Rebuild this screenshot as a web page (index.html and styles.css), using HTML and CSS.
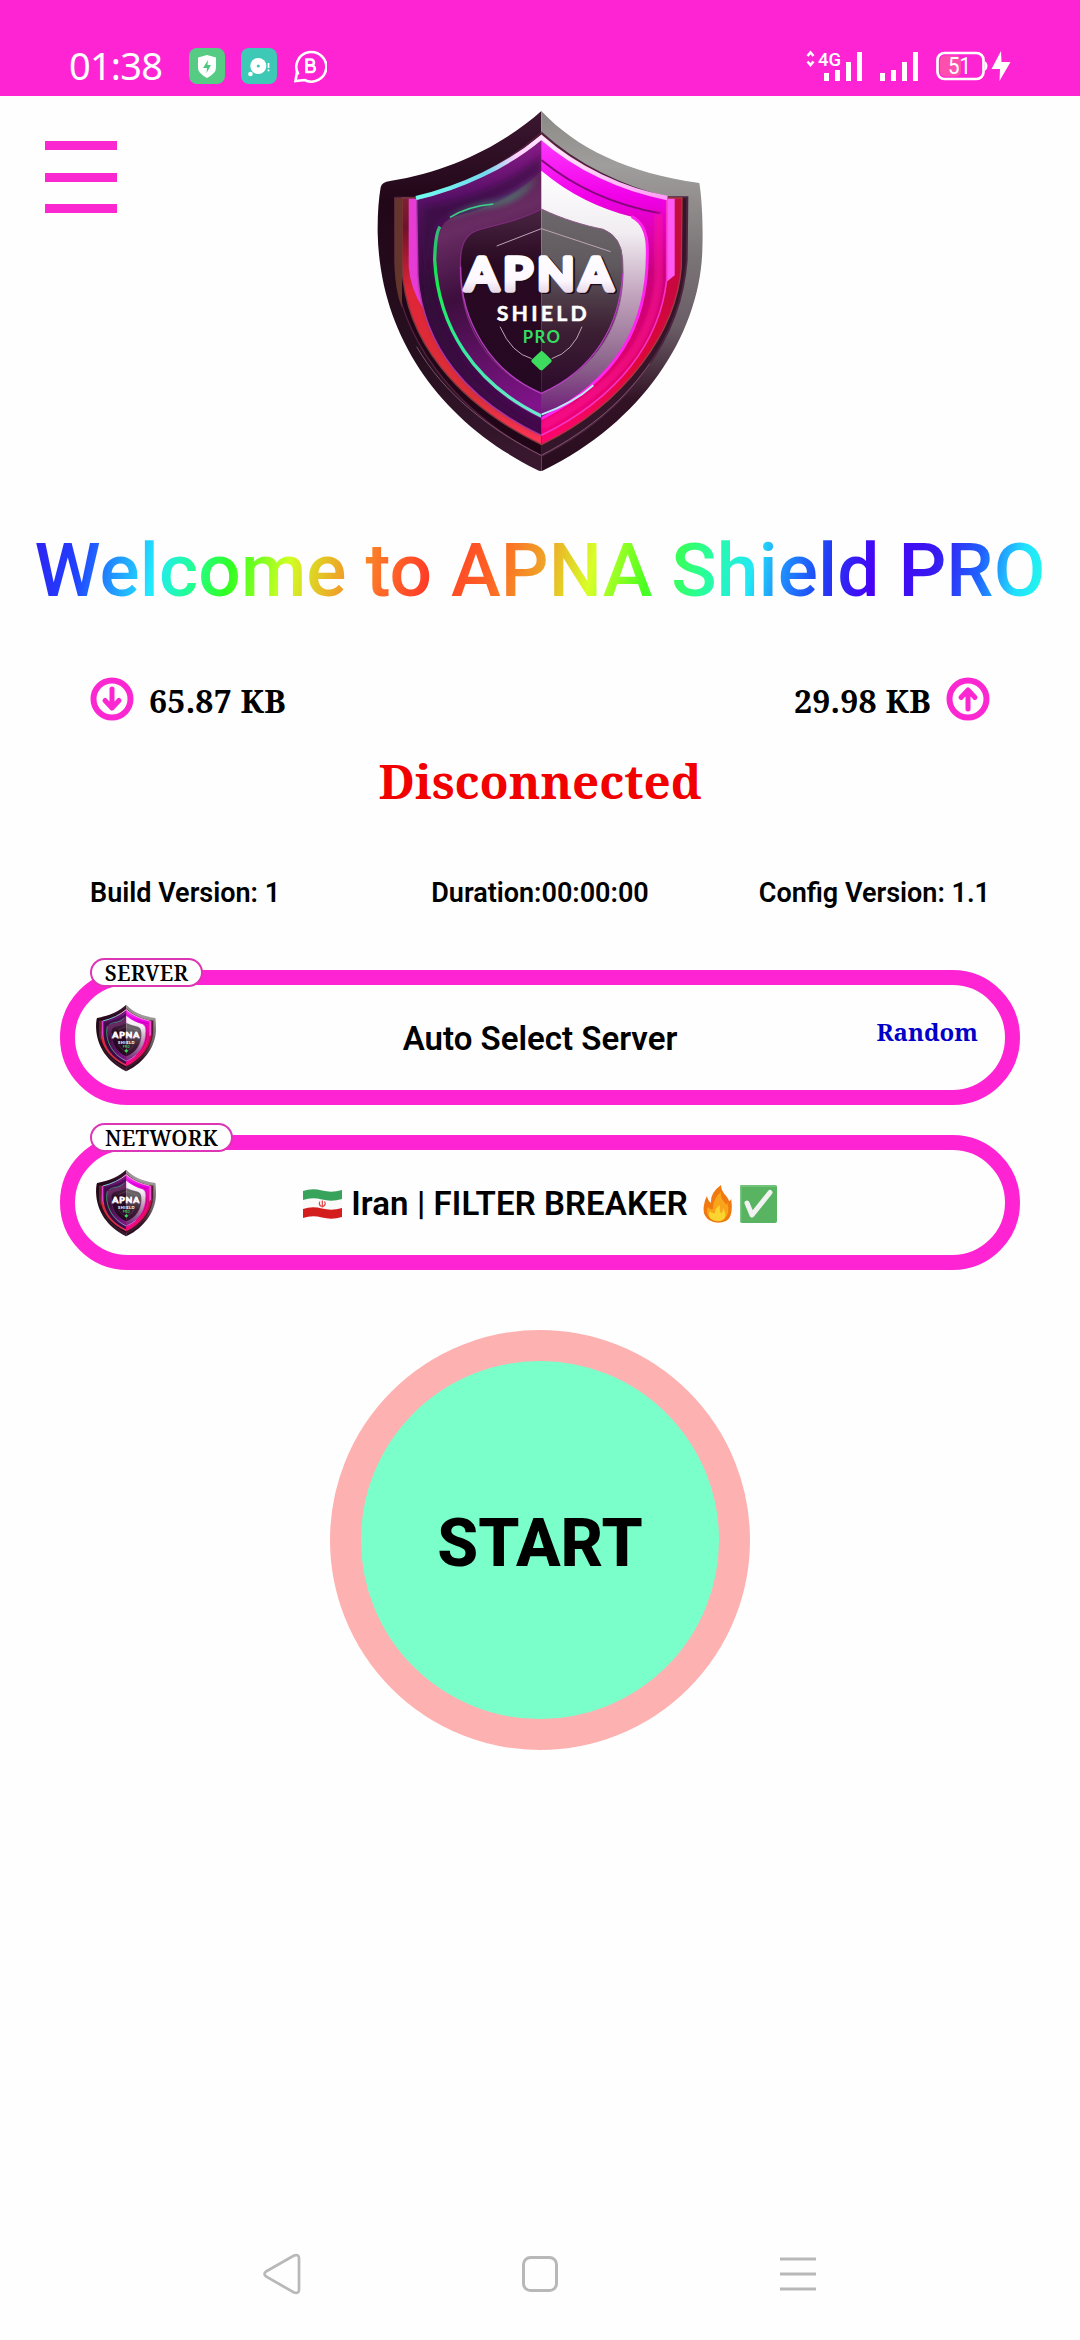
FILE: index.html
```html
<!DOCTYPE html>
<html lang="en">
<head>
<meta charset="utf-8">
<title>APNA Shield PRO</title>
<link rel="stylesheet" href="styles.css">
</head>
<body>
<svg class="defs" width="0" height="0" aria-hidden="true">
  <defs>
    <linearGradient id="rimDark" x1="0" y1="0" x2="0" y2="1"><stop offset="0" stop-color="#3b1730"/><stop offset=".25" stop-color="#220718"/><stop offset=".7" stop-color="#26101f"/><stop offset="1" stop-color="#3b1930"/></linearGradient>
    <linearGradient id="rimLight" x1="0" y1="0" x2="0" y2="1"><stop offset="0" stop-color="#8b8985"/><stop offset=".15" stop-color="#a09e9c"/><stop offset=".4" stop-color="#7b7577"/><stop offset=".6" stop-color="#6a5d66"/><stop offset=".8" stop-color="#321325"/><stop offset="1" stop-color="#280c1e"/></linearGradient>
    <linearGradient id="redLeft" x1="0" y1="0" x2="0" y2="1"><stop offset="0" stop-color="#9c4047"/><stop offset=".3" stop-color="#701327"/><stop offset=".5" stop-color="#e02537"/><stop offset=".85" stop-color="#dc3039"/><stop offset="1" stop-color="#ff3458"/></linearGradient>
    <linearGradient id="redRight" x1="0" y1="0" x2="0" y2="1"><stop offset="0" stop-color="#b91734"/><stop offset=".5" stop-color="#c90740"/><stop offset=".75" stop-color="#e00838"/><stop offset="1" stop-color="#ff0474"/></linearGradient>
    <linearGradient id="bandLeft" x1="0" y1="0" x2="0" y2="1"><stop offset="0" stop-color="#8a1a87"/><stop offset=".2" stop-color="#5a1169"/><stop offset=".5" stop-color="#370d3d"/><stop offset="1" stop-color="#4a0852"/></linearGradient>
    <linearGradient id="bandRight" x1="0" y1="0" x2="0" y2="1"><stop offset="0" stop-color="#ff3bff"/><stop offset=".2" stop-color="#f000e8"/><stop offset=".45" stop-color="#c7007c"/><stop offset=".75" stop-color="#da0065"/><stop offset="1" stop-color="#f00079"/></linearGradient>
    <linearGradient id="plateLeft" x1="0" y1="0" x2=".3" y2="1"><stop offset="0" stop-color="#581951"/><stop offset=".25" stop-color="#682c62"/><stop offset=".5" stop-color="#3d0e3e"/><stop offset="1" stop-color="#81138a"/></linearGradient>
    <linearGradient id="plateRight" x1="0" y1="0" x2="0" y2="1"><stop offset="0" stop-color="#ffffff"/><stop offset=".25" stop-color="#f1edf1"/><stop offset=".5" stop-color="#c2a4be"/><stop offset=".78" stop-color="#8c648b"/><stop offset="1" stop-color="#6d1878"/></linearGradient>
    <linearGradient id="coreLeft" x1="0" y1="0" x2="0" y2="1"><stop offset="0" stop-color="#492542"/><stop offset=".3" stop-color="#2a0922"/><stop offset="1" stop-color="#240822"/></linearGradient>
    <linearGradient id="coreRight" x1="0" y1="0" x2="0" y2="1"><stop offset="0" stop-color="#6d686b"/><stop offset=".3" stop-color="#605a5e"/><stop offset=".65" stop-color="#3d2034"/><stop offset="1" stop-color="#2c0a2a"/></linearGradient>
    <linearGradient id="edgeTop" x1="0" y1="0" x2="1" y2="0"><stop offset="0" stop-color="#70ffee"/><stop offset=".28" stop-color="#73d9ed"/><stop offset=".4" stop-color="#ffd0ff"/><stop offset=".52" stop-color="#ffe8ff"/><stop offset="1" stop-color="#ff9af4"/></linearGradient>
    <linearGradient id="edgeGreen" x1="0" y1="0" x2="0" y2="1"><stop offset="0" stop-color="#32b57a"/><stop offset=".3" stop-color="#15ec4c"/><stop offset=".65" stop-color="#38e8a0"/><stop offset="1" stop-color="#6fe9cf"/></linearGradient>
    <linearGradient id="letters" x1="0" y1="0" x2="0" y2="1"><stop offset="0" stop-color="#ffffff"/><stop offset=".65" stop-color="#fdf8ff"/><stop offset="1" stop-color="#dcc3d6"/></linearGradient>
    <clipPath id="leftHalf"><rect x="0" y="0" width="544" height="1160"/></clipPath>
    <clipPath id="rightHalf"><rect x="544" y="0" width="536" height="1160"/></clipPath>
    <filter id="glow" x="-20%" y="-20%" width="140%" height="140%"><feGaussianBlur stdDeviation="9"/></filter>
    <path id="rim" d="M544 33C650 145 800 218 1018 249C1028 310 1029 400 1027 450C1020 700 850 965 552 1110Q542 1116 532 1110C240 965 60 710 53 400Q52 320 62 262Q66 245 90 243C270 215 430 135 544 33Z"/>
    <path id="channel" d="M544 98C650 195 790 262 920 292L982 292L980 480C965 700 820 930 544 1068C275 930 110 700 104 480L104 292L166 292C300 262 435 195 544 98Z"/>
    <path id="redBand" d="M544 105C650 200 790 265 920 294L966 294L964 500C950 690 800 910 544 1034C290 910 135 720 126 500L126 294L166 294C300 265 440 200 544 105Z"/>
    <path id="innerBand" d="M544 112C650 206 790 270 920 296L920 540C900 720 780 890 544 1006C320 900 190 740 174 530L170 298C300 268 440 204 544 112Z"/>
    <path id="plate" d="M544 212C630 285 720 325 815 350Q862 372 862 450C865 680 770 840 544 956C340 860 235 680 226 480Q226 370 280 350C390 325 470 285 544 212Z"/>
    <path id="core" d="M544 327C610 358 670 376 730 388Q785 410 788 480C800 670 710 810 544 880C380 810 290 670 302 470Q306 402 360 388C425 372 490 356 544 327Z"/>
    <symbol id="shield" viewBox="52 33 976 1080">
      <g clip-path="url(#leftHalf)">
        <use href="#rim" fill="url(#rimDark)"/>
        <use href="#channel" fill="#210617" stroke="#54203f" stroke-width="4"/>
        <use href="#redBand" fill="url(#redLeft)" stroke="#7b3940" stroke-width="4"/>
        <path d="M104 294h22v330q-20-50-22-120z" fill="#63352b"/>
        <path d="M146 296h28v244l14 84q-38-62-42-124z" fill="#e63bd4"/>
        <use href="#innerBand" fill="url(#bandLeft)" stroke="#b03caf" stroke-width="4"/>
        <path d="M186 320C320 300 450 250 544 165V215C440 290 340 325 245 360Q205 400 205 500C220 700 330 880 544 985V1000C330 890 200 740 188 530Z" fill="#2b0b32" opacity=".5" filter="url(#glow)"/>
        <use href="#plate" fill="url(#plateLeft)"/>
        <path d="M240 380Q226 400 224 480C235 680 340 850 544 948" fill="none" stroke="url(#edgeGreen)" stroke-width="10"/>
        <path d="M270 350Q340 310 410 304Q480 280 530 232Q485 305 400 318Q330 325 270 355Z" fill="#3caa77" opacity=".75" filter="url(#glow)"/>
        <path d="M270 352Q320 320 400 312" fill="none" stroke="#3fd08a" stroke-width="5"/>
        <use href="#core" fill="url(#coreLeft)" stroke="#7b2b78" stroke-width="4"/>
      </g>
      <g clip-path="url(#rightHalf)">
        <use href="#rim" fill="url(#rimLight)"/>
        <use href="#channel" fill="#35152a" stroke="#4d2440" stroke-width="6"/>
        <use href="#redBand" fill="url(#redRight)" stroke="#a63a40" stroke-width="4"/>
        <path d="M918 296h26v230l-32 26z" fill="#ff5af5"/>
        <use href="#innerBand" fill="url(#bandRight)" stroke="#f336c6" stroke-width="5"/>
        <path d="M544 180C660 275 790 320 900 340" fill="none" stroke="#86087c" stroke-width="6"/>
        <path d="M896 340V540C880 720 770 860 544 980" fill="none" stroke="#ff1494" stroke-width="14" filter="url(#glow)"/>
        <use href="#plate" fill="url(#plateRight)"/>
        <path d="M815 350Q862 372 862 450C865 680 770 840 544 956" fill="none" stroke="#ff24ee" stroke-width="9"/>
        <path d="M544 944Q640 910 700 856" fill="none" stroke="#b7eaff" stroke-width="6"/>
        <use href="#core" fill="url(#coreRight)" stroke="#8a5a88" stroke-width="3"/>
      </g>
      <path d="M168 294C300 264 440 200 544 112C650 206 790 270 922 294" fill="none" stroke="url(#edgeTop)" stroke-width="13"/>
      <path d="M410 438L544 386L752 455M420 680Q455 760 515 776M575 776Q640 755 666 680" fill="none" stroke="#bca4b5" stroke-width="3"/>
      <path d="M302 500C300 660 390 815 544 880C700 810 780 680 788 520" fill="none" stroke="#b53cc0" stroke-width="4"/>
      <path d="M170 740C250 880 390 990 544 1066C700 985 800 890 870 790" fill="none" stroke="#7b5269" stroke-width="3"/>
      <g text-anchor="middle" class="shield-text">
        <text class="shield-name" x="549" y="573" font-size="136" textLength="456" lengthAdjust="spacingAndGlyphs" fill="#1c0b1c" stroke="#1c0b1c" stroke-width="18">APNA</text>
        <text class="shield-name" x="544" y="569" font-size="136" textLength="456" lengthAdjust="spacingAndGlyphs" fill="url(#letters)" stroke="url(#letters)" stroke-width="17">APNA</text>
        <text x="545" y="664" font-size="64" textLength="270" fill="#fff" stroke="#fff" stroke-width="1.500">SHIELD</text>
        <text x="544" y="730" font-size="50" textLength="112" fill="#37dc62">PRO</text>
      </g>
      <path d="M544 752Q548 752 574 779Q576 783 574 786L548 810Q544 812 540 810L515 786Q513 783 515 779Z" fill="#3ddc5e"/>
    </symbol>
  </defs>
</svg>

<div class="screen">
  <header class="status">
    <div class="status-left">
      <span class="clock">01:38</span>
      <svg width="36" height="36" viewBox="0 0 36 36"><rect width="36" height="36" rx="8" fill="#55cb83"/><path d="M18 7l9 2.500V20q0 5-9 10q-9-5-9-10V9.500z" fill="#fff"/><path d="M19 12l-5 8h4l-.5 5 4.500-8h-3.500z" fill="#4ec87f"/></svg>
      <svg class="gap-a" width="36" height="36" viewBox="0 0 36 36"><rect width="36" height="36" rx="8" fill="#3dc9b6"/><circle cx="17.300" cy="18" r="8" fill="#fff"/><circle cx="17.300" cy="18" r="1.600" fill="#3dc9b6"/><circle cx="9.500" cy="26" r="2.300" fill="#fff"/><path d="M27.500 15v5M27.500 21.500v1.800" stroke="#fff" stroke-width="1.700"/></svg>
      <svg class="gap-b" width="33" height="34" viewBox="0 0 33 34"><path d="M4.500 25.500A15 14.800 0 1 1 10.500 31L1.500 32L3 23" fill="none" stroke="#fff" stroke-width="2.600"/><path d="M12.500 10.500v12.500h5a3.300 3.300 0 0 0 0-6.600h-5h4.500a2.900 2.900 0 0 0 0-5.900z" fill="none" stroke="#fff" stroke-width="2.700"/></svg>
    </div>
    <div class="status-right">
      <svg width="58" height="36" viewBox="0 -2 58 36"><path d="M1.500 6l3-3.500 3 3.500M1.500 11.500l3 3.500 3-3.500" fill="none" stroke="#fff" stroke-width="2.600"/><text class="net" x="12" y="16" textLength="23" lengthAdjust="spacingAndGlyphs">4G</text><path d="M20.500 23v8M31.500 20v11M42.500 12v19M53.500 2v29" stroke="#fff" stroke-width="5"/></svg>
      <svg class="gap-c" width="38" height="36" viewBox="0 -2 38 36"><path d="M2.500 23v8M13.500 20v11M24.500 12v19M35.500 2v29" stroke="#fff" stroke-width="5"/></svg>
      <svg class="gap-d" width="76" height="36" viewBox="0 -2 76 36"><rect x="1.500" y="3" width="46" height="26" rx="7" fill="none" stroke="#fff" stroke-width="2.700"/><rect x="4" y="5.500" width="21" height="21" rx="5" fill="#ff4fae"/><path d="M49 12q3 4 0 8" stroke="#fff" stroke-width="2" fill="#fff"/><text class="pct" x="12" y="24" textLength="23" lengthAdjust="spacingAndGlyphs">51</text><path d="M65 1L55.500 19h8.500l-.5 12L74.500 12H65.500z" fill="#fff"/></svg>
    </div>
  </header>

  <section class="hero">
    <div class="menu"><i></i><i></i><i></i></div>
    <svg class="logo"><use href="#shield"/></svg>
  </section>

  <h1 class="title"><span>Welcome to APNA Shield PRO</span></h1>

  <section class="traffic">
    <div class="meter">
      <svg width="44" height="44" viewBox="0 0 44 44"><circle cx="22" cy="22" r="18.500" fill="none" stroke="#fb28d2" stroke-width="6"/><path d="M22 12v19M15 23.500l7 7.500 7-7.500" fill="none" stroke="#fb28d2" stroke-width="5" stroke-linecap="round" stroke-linejoin="round"/></svg>
      <span>65.87 KB</span>
    </div>
    <div class="meter">
      <span>29.98 KB</span>
      <svg width="44" height="44" viewBox="0 0 44 44"><circle cx="22" cy="22" r="18.500" fill="none" stroke="#fb28d2" stroke-width="6"/><path d="M22 32V13M15 20.500l7-7.500 7 7.500" fill="none" stroke="#fb28d2" stroke-width="5" stroke-linecap="round" stroke-linejoin="round"/></svg>
    </div>
  </section>

  <p class="state">Disconnected</p>

  <section class="info">
    <span>Build Version: 1</span><span>Duration:00:00:00</span><span>Config Version: 1.1</span>
  </section>

  <section class="pickers">
    <div class="picker">
      <span class="tag tag-server">SERVER</span>
      <svg class="thumb"><use href="#shield"/></svg>
      <span class="choice choice-server">Auto Select Server</span>
      <span class="mode">Random</span>
    </div>
    <div class="picker">
      <span class="tag tag-network">NETWORK</span>
      <svg class="thumb"><use href="#shield"/></svg>
      <span class="choice network">
        <svg width="39" height="30" viewBox="0 0 39 30"><path d="M0 2Q9-1 19 1.500T39 1V28Q29 31 19 28.500T0 29Z" fill="#fafafa"/><path d="M0 2Q9-1 19 1.500T39 1V10Q29 13 19 10.500T0 11Z" fill="#38a35b"/><path d="M0 20Q9 17 19 19.500T39 19V28Q29 31 19 28.500T0 29Z" fill="#d41d1d"/><path d="M17 12.500q-2 3 1.500 5M21.500 12.500q2 3-1.500 5M19.300 11.500v7" fill="none" stroke="#df4545" stroke-width="1.200"/></svg>
        <span class="network-name">Iran | FILTER BREAKER</span>
        <svg class="fire" width="29" height="38" viewBox="0 0 29 38"><path d="M18 0C18 8 25 11 26 16Q28 16 28 13Q31 32 23 36Q14 40 6 35Q-1 30 1 20Q2 14 4 11Q5 16 8 18Q7 8 18 0Z" fill="#f07a10"/><path d="M18 7Q17 13 22 18Q25 22 24 16Q28 29 21 34Q14 38 7 33Q2 27 5 22Q7 25 10 24Q10 13 18 7Z" fill="#f9a51c"/><path d="M17 20Q16 25 18 28Q20 28 20 23Q25 31 20 35Q14 38 8 34Q4 30 7 26Q9 29 12 28Q12 23 17 20Z" fill="#fbd42f"/></svg>
        <svg class="check" width="37" height="38" viewBox="0 0 37 38"><rect width="37" height="38" rx="2" fill="#58b461"/><path d="M.7 37V1h35.600" fill="none" stroke="#7bc683" stroke-width="1.400"/><path d="M7 18l5 12L30 7.500" fill="none" stroke="#f2f2f2" stroke-width="5" stroke-linecap="round" stroke-linejoin="round"/></svg>
      </span>
    </div>
  </section>

  <button class="start"><span>START</span></button>

  <nav class="navbar">
    <svg width="38" height="42" viewBox="0 0 38 42"><path d="M3 18.500L31 2.500Q36 1 36 5V37Q36 41 31 39.500L3 23.500Q0 21 3 18.500Z" fill="none" stroke="#b8b8b8" stroke-width="2.700"/></svg>
    <svg width="38" height="38" viewBox="0 0 38 38"><rect x="2.500" y="2.500" width="33" height="33" rx="7" fill="none" stroke="#b8b8b8" stroke-width="3"/></svg>
    <svg width="38" height="38" viewBox="0 0 38 38"><path d="M1 4h36M1 19h36M1 34h36" stroke="#b8b8b8" stroke-width="3"/></svg>
  </nav>
</div>
</body>
</html>
```
FILE: styles.css
```css
* { box-sizing: border-box; }
body { margin: 0; background: #fefefe; font-family: Roboto, sans-serif; color: #000; }
svg { display: block; flex: none; }
.defs { position: absolute; }
.screen { width: 1080px; height: 2340px; display: flex; flex-direction: column; overflow: hidden; }

.status { height: 96px; flex: none; background: #ff24d3; display: flex; justify-content: space-between; padding: 48px 68px 0 69px; }
.status-left, .status-right { display: flex; height: 36px; align-items: center; }
.clock { width: 120px; font: 400 38px/34px "Noto Sans", "Open Sans", sans-serif; color: #fff; letter-spacing: -0.8px; white-space: nowrap; padding-bottom: 2px; }
.gap-a { margin-left: 16px; }
.gap-b { margin-left: 17px; }
.gap-c { margin-left: 16px; }
.gap-d { margin-left: 18px; }
.net { font: 500 19px Roboto, sans-serif; fill: #fff; }
.pct { font: 400 23px Roboto, sans-serif; fill: #fff; }

.hero { height: 404px; flex: none; display: grid; grid-template-columns: 332px 326px 1fr; padding: 15px 0 0 45px; align-items: start; }
.menu { display: grid; gap: 22.500px; padding-top: 30px; width: 72px; }
.menu i { height: 9px; background: #fb28d2; }
.logo { width: 326px; height: 360px; }
.shield-text { font-family: Lato, sans-serif; font-weight: 700; stroke-linejoin: round; }
.shield-name { font-weight: 400; letter-spacing: 14px; }

.title { margin: 0; height: 140px; flex: none; display: flex; justify-content: center; align-items: center; font-size: 75px; font-weight: 500; line-height: 100px; letter-spacing: 0.1px; white-space: nowrap; }
.title span {
  background: linear-gradient(102deg, #3020f0 0%, #2040ff 5%, #22e8ff 12.500%, #22ff90 16.500%, #30ff20 20%, #d0ff22 25.500%, #f0a028 31%, #ff6a28 35%, #ff3a28 39.500%, #ff6024 45%, #f0a028 50%, #d8ff28 55%, #48ff20 60.500%, #28ff98 66%, #22e8f5 70.500%, #2090ff 73.500%, #2040f5 77.500%, #4800f5 82.500%, #3818f0 88%, #2060ff 92.500%, #22e0ff 96.500%, #22ffe0 100%);
  -webkit-background-clip: text; background-clip: text; color: transparent;
}

.traffic { height: 107px; flex: none; padding: 37px 90px 0; display: flex; justify-content: space-between; align-items: flex-start; }
.meter { display: flex; gap: 15px; height: 44px; align-items: center; font: 700 32px/44px "Noto Serif", "DejaVu Serif Condensed", serif; }
.meter span { padding-top: 3px; letter-spacing: 0.25px; }
.state { margin: 0; height: 93px; flex: none; text-align: center; font: 700 47.500px/68px "Noto Serif", "DejaVu Serif Condensed", serif; color: #f20000; }

.info { height: 130px; flex: none; padding: 37px 90px 0; display: grid; grid-template-columns: 1fr auto 1fr; font-size: 27px; line-height: 32px; font-weight: 600; }
.info span:last-child { text-align: right; }

.pickers { flex: none; display: grid; gap: 30px; padding: 0 60px; }
.picker { height: 135px; border: 15px solid #ff24d3; border-radius: 68px; display: grid; grid-template-columns: 60px 1fr 60px; padding: 0 21px; align-items: center; position: relative; }
.thumb { width: 60px; height: 72px; }
.tag { position: absolute; left: 15px; top: -27px; height: 29px; border: 2px solid #dc35b6; border-radius: 15px; background: #fff; text-align: center; font: 600 21px/27px "Noto Serif", "DejaVu Serif Condensed", serif; }
.tag-server { width: 113px; letter-spacing: 0.3px; }
.tag-network { width: 143px; letter-spacing: 0.3px; }
.choice { font-size: 33px; line-height: 40px; font-weight: 600; text-align: center; white-space: nowrap; padding-top: 2px; }
.mode { justify-self: end; padding-right: 6px; margin-top: -12px; color: #0000c8; font: 700 24px/30px "Noto Serif", "DejaVu Serif Condensed", serif; }
.network { display: flex; justify-content: center; align-items: center; }
.network-name { margin: 0 15px 0 9px; letter-spacing: 0.1px; }
.check { margin-left: 8px; }

.start { margin: 60px auto 0; width: 420px; height: 420px; flex: none; border: 31px solid #fdb2b1; border-radius: 50%; background: #7affca; color: #000; font: 800 66px/80px Roboto, sans-serif; padding: 8px 0 0; }

.navbar { margin-top: auto; height: 132px; flex: none; display: grid; grid-template-columns: repeat(3, 258px); justify-content: center; justify-items: center; align-items: center; }
```
